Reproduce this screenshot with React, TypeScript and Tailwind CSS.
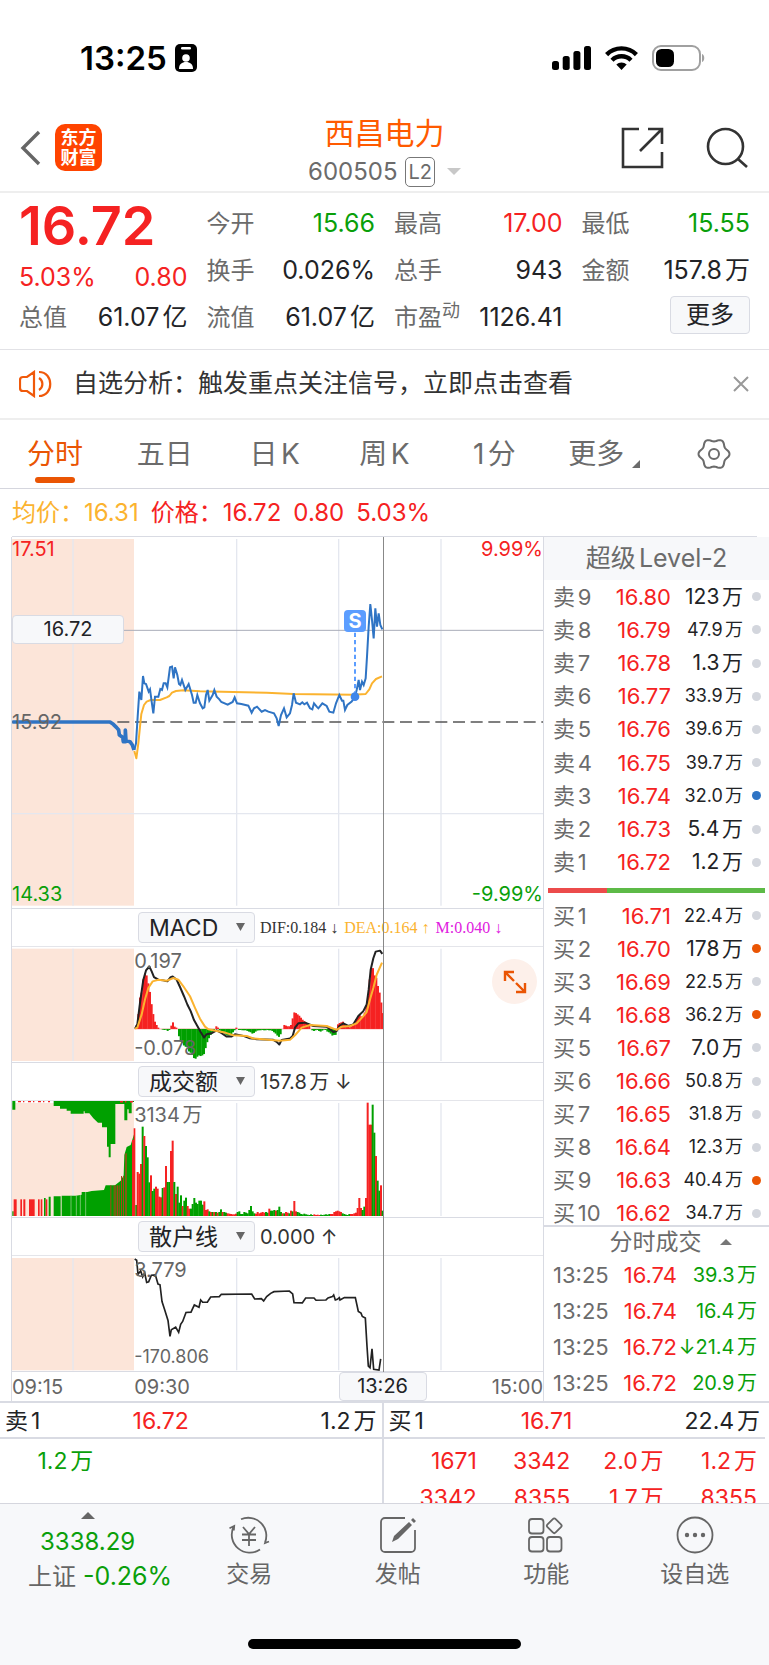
import type { ReactNode } from "react";

type Tone = "r" | "g";
type Bar = [x: number, height: number, tone: Tone];

type Level = {
  label: string;
  price: string;
  volume: string;
  dot?: "blue" | "orange";
};

const RED = "#f52222";
const GREEN = "#00a000";

const toneFill: Record<Tone, string> = { r: RED, g: GREEN };

const toneText: Record<string, string> = {
  red: "text-[#f52222]",
  green: "text-[#0a9f0a]",
  dark: "text-[#222326]",
};

const quotes = [
  { label: "今开", value: "15.66", tone: "green" },
  { label: "最高", value: "17.00", tone: "red" },
  { label: "最低", value: "15.55", tone: "green" },
  { label: "换手", value: "0.026%", tone: "dark" },
  { label: "总手", value: "943", tone: "dark" },
  { label: "金额", value: "157.8万", tone: "dark" },
  { label: "流值", value: "61.07亿", tone: "dark" },
  { label: "市盈", sup: "动", value: "1126.41", tone: "dark" },
];

const tabs = ["分时", "五日", "日K", "周K", "1分"];

const sells: Level[] = [
  { label: "卖9", price: "16.80", volume: "123万" },
  { label: "卖8", price: "16.79", volume: "47.9万" },
  { label: "卖7", price: "16.78", volume: "1.3万" },
  { label: "卖6", price: "16.77", volume: "33.9万" },
  { label: "卖5", price: "16.76", volume: "39.6万" },
  { label: "卖4", price: "16.75", volume: "39.7万" },
  { label: "卖3", price: "16.74", volume: "32.0万", dot: "blue" },
  { label: "卖2", price: "16.73", volume: "5.4万" },
  { label: "卖1", price: "16.72", volume: "1.2万" },
];

const buys: Level[] = [
  { label: "买1", price: "16.71", volume: "22.4万" },
  { label: "买2", price: "16.70", volume: "178万", dot: "orange" },
  { label: "买3", price: "16.69", volume: "22.5万" },
  { label: "买4", price: "16.68", volume: "36.2万", dot: "orange" },
  { label: "买5", price: "16.67", volume: "7.0万" },
  { label: "买6", price: "16.66", volume: "50.8万" },
  { label: "买7", price: "16.65", volume: "31.8万" },
  { label: "买8", price: "16.64", volume: "12.3万" },
  { label: "买9", price: "16.63", volume: "40.4万", dot: "orange" },
  { label: "买10", price: "16.62", volume: "34.7万" },
];

const trades = [
  { time: "13:25", price: "16.74", volume: "39.3万" },
  { time: "13:25", price: "16.74", volume: "16.4万" },
  { time: "13:25", price: "16.72", volume: "21.4万", arrow: "↓" },
  { time: "13:25", price: "16.72", volume: "20.9万" },
];

// Chart geometry is kept in 3x units
const OPENING = "37,576 330,576 340,583 350,593 356,600 358,615 368,622 370,635 376,635 376,600 378,632 390,635 397,645 402,660";
const PRICE =
  "403,660 408,640 413,560 418,485 424,510 429,438 433,460 438,462 446,485 450,478 455,515 460,550 465,500 475,500 481,477 486,480 491,460 497,460 502,472 510,412 516,410 521,445 525,412 532,435 537,462 541,465 546,450 556,480 566,462 576,495 581,518 587,518 592,495 600,520 608,535 613,532 618,495 623,480 628,512 638,495 643,480 650,500 658,508 664,516 683,524 698,516 704,502 711,520 724,522 745,527 755,548 762,535 771,530 785,545 795,540 805,545 822,550 830,565 836,588 843,555 852,535 860,562 870,550 876,525 881,490 888,518 900,523 907,517 913,523 921,518 930,535 937,538 942,520 950,530 955,535 967,520 980,528 988,545 1000,548 1008,520 1018,495 1026,512 1030,512 1035,540 1042,525 1055,515 1065,500 1070,480 1076,450 1080,480 1086,455 1091,465 1097,445 1101,380 1106,290 1111,222 1116,270 1121,325 1126,235 1131,290 1136,250 1141,285 1147,298";
const AVERAGE =
  "403,663 409,685 415,640 420,590 424,552 432,525 440,515 452,510 480,510 500,502 508,498 516,488 528,483 550,481 600,484 700,486 800,488 880,492 1060,494 1097,492 1108,478 1116,460 1128,447 1146,439";
const DIF =
  "405,388 412,375 420,310 430,240 438,212 448,200 455,215 462,232 475,240 490,242 502,245 512,232 518,230 530,240 540,262 552,290 562,315 572,335 582,362 592,380 602,398 612,415 620,405 635,402 650,393 665,402 680,412 695,412 705,405 730,410 750,417 770,420 820,422 830,428 838,436 845,422 870,418 878,410 885,385 895,372 915,370 940,380 980,382 1000,398 1010,395 1018,380 1030,372 1045,380 1060,375 1075,350 1090,335 1100,315 1106,270 1112,210 1120,175 1127,155 1140,152 1147,162";
const DEA =
  "405,388 412,385 425,345 435,300 445,265 458,245 475,240 500,243 520,235 535,240 550,260 570,290 585,325 600,358 615,382 625,390 650,395 675,400 700,408 740,410 760,418 840,425 870,422 885,408 905,385 930,377 980,380 1010,392 1025,382 1050,380 1070,372 1090,350 1100,338 1110,300 1120,265 1130,225 1146,188";
const RETAIL =
  "404,326 410,330 414,372 422,362 428,380 434,368 440,397 446,395 454,375 466,374 474,402 480,404 486,455 494,480 504,512 510,560 514,540 527,532 536,548 542,524 548,515 558,488 573,487 583,465 597,472 602,450 608,457 622,457 632,441 658,440 664,433 755,432 764,447 784,446 791,453 800,440 812,430 822,425 868,423 878,432 882,458 907,459 917,444 942,444 948,451 978,450 984,444 997,440 1001,435 1006,450 1012,448 1018,443 1020,450 1033,443 1066,443 1075,485 1083,490 1087,500 1096,505 1101,590 1105,650 1110,655 1116,598 1121,660 1137,662 1142,628";

const series = (start: number, tone: Tone, heights: number[]): Bar[] =>
  heights.map((height, i) => [start + i * 5, height, tone]);

const macdBars: Bar[] = [
  ...series(407, "r", [12, 45, 95, 110, 150, 168, 162, 138, 112, 75, 45, 22, 12, 4]),
  ...series(485, "g", [2, 3, 2, 6, 3]),
  ...series(511, "r", [10, 20, 7, 4]),
  ...series(534, "g", [22, 38, 42, 50, 54, 56, 68, 72, 78, 88, 90, 84, 80, 82, 80, 76, 58, 40, 28, 18, 10, 6]),
  ...series(646, "r", [8, 4]),
  ...series(656, "g", [4, 8, 12, 14, 18, 20, 20, 16, 10, 4]),
  ...series(706, "r", [4]),
  ...series(714, "g", [3, 3, 4, 4, 4, 6, 8, 10, 14, 12, 8, 5, 4, 4, 3, 4, 4, 3, 4, 4, 6, 10, 14, 20, 24, 16]),
  ...series(850, "r", [12, 10, 8, 8, 12, 32, 50, 48, 44, 40, 34, 28, 24, 20, 16, 12]),
  ...series(934, "g", [4, 6, 4, 3, 6, 8, 5, 2, 3, 8, 10, 14, 20, 18, 18]),
  ...series(1011, "r", [14, 18, 20, 22, 12, 8, 6, 5, 8, 10, 18, 30, 36, 42, 38, 36, 50, 70, 100, 150, 184, 184, 162, 155, 130, 110, 80, 48]),
];

const volumeBars: Bar[] = [
  [406, 33, "g"], [410, 132, "r"], [415, 127, "r"], [420, 156, "r"], [425, 268, "g"], [430, 240, "r"], [435, 210, "g"],
  [440, 176, "g"], [445, 101, "g"], [450, 122, "r"], [455, 75, "g"], [460, 82, "g"], [465, 88, "r"], [470, 82, "r"],
  [475, 58, "r"], [480, 56, "r"], [485, 84, "g"], [490, 86, "r"], [495, 150, "r"], [500, 102, "g"], [505, 102, "g"],
  [510, 195, "r"], [515, 226, "r"], [520, 102, "g"], [525, 66, "r"], [530, 88, "g"], [535, 40, "g"], [540, 62, "g"],
  [545, 30, "r"], [550, 46, "g"], [555, 55, "g"], [560, 30, "r"], [565, 22, "r"], [570, 22, "g"], [575, 36, "g"],
  [580, 54, "g"], [585, 40, "g"], [590, 36, "g"], [595, 46, "g"], [600, 46, "g"], [605, 34, "g"], [610, 44, "r"],
  [615, 18, "r"], [620, 20, "r"], [625, 14, "g"], [630, 12, "r"], [635, 12, "g"], [640, 12, "r"], [645, 12, "g"],
  [650, 10, "r"], [655, 12, "g"], [660, 20, "g"], [665, 12, "r"], [670, 12, "g"], [675, 10, "g"],
  ...series(680, "r", [8, 7, 6, 5, 5, 7]),
  ...series(710, "g", [12, 14, 6, 6, 12, 10, 8]),
  ...series(745, "g", [18, 30, 14, 8]),
  ...series(765, "r", [7, 12, 8, 10, 12, 10]),
  ...series(795, "g", [12, 10]),
  [805, 22, "r"], [810, 16, "g"], [815, 16, "g"], [820, 18, "g"], [825, 16, "r"], [830, 18, "g"], [835, 28, "g"],
  [840, 12, "g"], [845, 8, "r"], [850, 8, "g"], [855, 12, "r"], [860, 10, "r"], [865, 8, "g"], [870, 16, "r"],
  [875, 14, "g"], [880, 45, "r"], [885, 14, "r"], [890, 12, "g"], [895, 10, "g"],
  ...series(900, "g", [6, 5, 7, 5, 4, 3, 5, 3]),
  ...series(940, "r", [5, 3, 4, 3]),
  ...series(960, "g", [4, 3, 4, 5, 4, 6]),
  ...series(990, "r", [6, 6, 12, 14, 16, 14, 12]),
  ...series(1025, "g", [8, 6, 4, 3, 6]),
  ...series(1050, "r", [6, 6, 8, 10, 24, 54]),
  [1080, 24, "r"], [1085, 18, "g"], [1090, 28, "g"], [1095, 54, "r"], [1100, 340, "r"], [1105, 274, "r"],
  [1110, 274, "r"], [1115, 334, "g"], [1120, 250, "g"], [1125, 180, "r"], [1130, 106, "g"], [1135, 76, "g"],
  [1140, 92, "r"], [1145, 16, "g"],
];

const auctionRed = [[41, 9], [61, 5], [70, 6], [87, 17], [114, 5], [122, 5], [137, 5]];
const auctionStripes = [331, 341, 346, 351, 356, 363, 369];

const gearPath = (() => {
  const points = Array.from({ length: 72 }, (_, i) => {
    const angle = (i * Math.PI) / 36;
    const radius = 14 + 1.5 * Math.cos(6 * angle);
    return `${(17 + radius * Math.cos(angle)).toFixed(2)},${(17 + radius * Math.sin(angle)).toFixed(2)}`;
  });
  return `M${points.join("L")}Z`;
})();

function StatusBar() {
  return (
    <div className="flex h-[100px] items-center justify-between pt-4 pr-16 pl-20">
      <div className="flex items-center gap-2 text-[33px] leading-8 font-semibold text-black">
        13:25
        <svg width="22" height="28" viewBox="0 0 22 28">
          <rect width="22" height="28" rx="5" fill="#000" />
          <rect x="6" y="3" width="10" height="2.6" rx="1.3" fill="#fff" />
          <circle cx="11" cy="14" r="3.8" fill="#fff" />
          <path d="M4 25c0-5 3-7 7-7s7 2 7 7z" fill="#fff" />
        </svg>
      </div>
      <div className="flex items-center gap-[14px]">
        <svg width="39" height="24" viewBox="0 0 39 24">
          <rect x="0" y="15" width="7" height="9" rx="2.5" />
          <rect x="10.7" y="10" width="7" height="14" rx="2.5" />
          <rect x="21.4" y="5" width="7" height="19" rx="2.5" />
          <rect x="32" y="0" width="7" height="24" rx="2.5" />
        </svg>
        <svg width="33" height="24" viewBox="0 0 33 24" fill="none" stroke="#000" strokeWidth="4.4">
          <path d="M1.6 8.6a21 21 0 0 1 29.8 0" />
          <path d="M7 14.2a13.4 13.4 0 0 1 19 0" />
          <path d="M11.3 18.6a7.4 7.4 0 0 1 10.4 0L16.5 24z" fill="#000" stroke="none" />
        </svg>
        <svg width="53" height="26" viewBox="0 0 53 26">
          <rect x="1" y="1" width="47" height="24" rx="8" fill="none" stroke="#a0a0a0" strokeWidth="2" />
          <path d="M50 9c3 1 3 7 0 8z" fill="#a0a0a0" />
          <rect x="4" y="4" width="18" height="18" rx="5.5" />
        </svg>
      </div>
    </div>
  );
}

function Header() {
  return (
    <header className="grid h-[93px] grid-cols-[1fr_auto_1fr] items-center border-b-2 border-[#eeeeee] px-5 pt-1">
      <div className="flex items-center gap-[14px]">
        <button aria-label="返回">
          <svg width="21" height="36" viewBox="0 0 21 36" fill="none" stroke="#666" strokeWidth="3.4">
            <path d="M19 2 3 18l16 16" />
          </svg>
        </button>
        <a
          href="#"
          className="flex size-[47px] flex-col items-center justify-center rounded-[10px] bg-[#ff4400] text-[18px] leading-[20px] font-bold text-white"
        >
          <span>东方</span>
          <span>财富</span>
        </a>
      </div>
      <div className="flex flex-col items-center pt-2">
        <h1 className="text-[30px] leading-10 text-[#ff5a00]">西昌电力</h1>
        <div className="flex items-center gap-2 text-[24px] leading-[38px] text-[#6b6b6b]">
          600505
          <span className="rounded-[5px] border border-[#777] px-[2px] text-[20px] leading-7">L2</span>
          <svg className="ml-1" width="14" height="7" viewBox="0 0 14 7" fill="#c8c8c8">
            <path d="M0 0h14L7 7z" />
          </svg>
        </div>
      </div>
      <div className="flex items-center justify-end gap-10">
        <button aria-label="分享">
          <svg width="44" height="44" viewBox="0 0 44 44" fill="none" stroke="#333" strokeWidth="2.6">
            <path d="M18 3H2v38h39V26M27 3h14v15M40 4 19 25" />
          </svg>
        </button>
        <button aria-label="搜索">
          <svg width="44" height="44" viewBox="0 0 44 44" fill="none" stroke="#333" strokeWidth="2.6">
            <circle cx="20.5" cy="20.5" r="17.5" />
            <path d="m33 33 9 8" />
          </svg>
        </button>
      </div>
    </header>
  );
}

function Stats() {
  return (
    <section className="grid grid-cols-4 gap-x-[19px] border-b border-[#e2e2e6] px-[19px] pt-[7px] pb-2 text-[24px] leading-[47px]">
      <div className="row-span-3 flex flex-col">
        <div className="text-[54px] leading-[52px] font-semibold text-[#f52222]">16.72</div>
        <div className="flex h-[42px] justify-between text-[25px] leading-[50px] text-[#f52222]">
          <span>5.03%</span>
          <span>0.80</span>
        </div>
        <div className="flex justify-between">
          <span className="text-[#6b6b6b]">总值</span>
          <span className="text-[25px] text-[#222326]">61.07亿</span>
        </div>
      </div>
      {quotes.map((q) => (
        <div key={q.label} className="flex justify-between whitespace-nowrap">
          <span className="text-[#6b6b6b]">
            {q.label}
            {q.sup && <sup className="text-[18px] leading-none">{q.sup}</sup>}
          </span>
          <span className={`text-[25px] ${toneText[q.tone]}`}>{q.value}</span>
        </div>
      ))}
      <div className="flex items-start justify-end pt-[2px]">
        <button className="rounded-[4px] border border-[#d9dbe3] bg-[#f7f8fa] px-[15px] leading-9 text-[#222326]">
          更多
        </button>
      </div>
    </section>
  );
}

function Notice() {
  return (
    <section className="flex h-[70px] items-center border-b-2 border-[#eeeeee] px-[19px] text-[25px] text-[#333]">
      <svg width="34" height="28" viewBox="0 0 34 28" fill="none" stroke="#f0590a" strokeWidth="2.2">
        <path d="M15 2v24l-7-5H4a3 3 0 0 1-3-3V10a3 3 0 0 1 3-3h4zM20 8a7 7 0 0 1 0 12M20 2c15 0 15 24 0 24" />
      </svg>
      <p className="ml-5 flex-1 whitespace-nowrap">自选分析：触发重点关注信号，立即点击查看</p>
      <button aria-label="关闭">
        <svg width="18" height="16" viewBox="0 0 18 16" stroke="#999" strokeWidth="2">
          <path d="m2 1 14 14M16 1 2 15" />
        </svg>
      </button>
    </section>
  );
}

function Tabs() {
  return (
    <nav className="flex h-[69px] items-stretch border-b border-[#d5d6de] text-[28px] text-[#6b6b6b]">
      {tabs.map((tab, i) => (
        <button
          key={tab}
          className={`relative flex-1 ${i === 0 ? "text-[#ea5504]" : ""}`}
        >
          {tab}
          {i === 0 && (
            <span className="absolute bottom-[5px] left-1/2 h-[6px] w-10 -translate-x-1/2 rounded-full bg-[#ea5504]" />
          )}
        </button>
      ))}
      <button className="flex flex-1 items-center justify-center gap-2">
        更多
        <svg className="mt-5" width="8" height="8" viewBox="0 0 8 8" fill="#6b6b6b">
          <path d="M8 0v8H0z" />
        </svg>
      </button>
      <button className="flex flex-1 items-center justify-center" aria-label="设置">
        <svg width="34" height="34" viewBox="0 0 34 34" fill="none" stroke="#6b6b6b" strokeWidth="2">
          <path d={gearPath} />
          <circle cx="17" cy="17" r="5" />
        </svg>
      </button>
    </nav>
  );
}

function Panel({
  box,
  top,
  bottom,
  height,
  drawing,
  children,
}: {
  box: string;
  top: number;
  bottom: number;
  height: string;
  drawing: ReactNode;
  children?: ReactNode;
}) {
  return (
    <div className={`relative border-b border-[#d9dbe3] text-[20px] leading-6 text-[#666] ${height}`}>
      <svg className="block size-full" viewBox={box} preserveAspectRatio="none">
        <rect x="36" y={top} width="366" height={bottom - top} fill="#fce5d9" />
        <path
          d={`M219 ${top}V${bottom}M710 ${top}V${bottom}M1016 ${top}V${bottom}M1323 ${top}V${bottom}`}
          stroke="#e4e7ef"
          strokeWidth="4"
        />
        {drawing}
      </svg>
      {children}
    </div>
  );
}

function IndicatorBar({ name, children }: { name: string; children: ReactNode }) {
  return (
    <div className="flex h-[38px] items-center gap-[5px] border-b border-[#e4e5ea] pl-[126px] text-[20px] whitespace-nowrap text-[#333]">
      <label className="relative flex shrink-0">
        <select
          aria-label="指标"
          className="h-[31px] w-[117px] appearance-none rounded-[4px] border border-[#d9dbe3] bg-[#f7f8fa] pl-[10px] text-[23px] leading-7 text-[#222326]"
        >
          <option>{name}</option>
        </select>
        <svg className="absolute top-[11px] right-[10px]" width="9" height="8" viewBox="0 0 9 8" fill="#666">
          <path d="M0 0h9L4.5 8z" />
        </svg>
      </label>
      {children}
    </div>
  );
}

function Bars({ data, base, down }: { data: Bar[]; base: number; down?: boolean }) {
  return (
    <>
      {data.map(([x, height, tone]) => (
        <rect
          key={x}
          x={x}
          y={down && tone === "g" ? base : base - height}
          width="6"
          height={height}
          fill={toneFill[tone]}
        />
      ))}
    </>
  );
}

function Charts() {
  return (
    <div className="relative ml-[11px] min-w-0 flex-1 border-r border-l border-[#d9dbe3]">
      <Panel
        box="36 21 1593 1113"
        top={27}
        bottom={1127}
        height="h-[372px]"
        drawing={
          <>
            <path d="M36 851H1629" stroke="#e4e7ef" strokeWidth="4" />
            <path d="M36 301H1629" stroke="#a9adb8" strokeWidth="3" />
            <path d="M36 576H1629" stroke="#555" strokeWidth="5" strokeDasharray="36 17" strokeDashoffset="2" />
            <g fill="none" strokeLinejoin="round">
              <polyline points={AVERAGE} stroke="#fbb32f" strokeWidth="6" />
              <polyline points={OPENING} stroke="#2f74c4" strokeWidth="11" />
              <polyline points={PRICE} stroke="#2f74c4" strokeWidth="6" strokeLinejoin="miter" />
            </g>
            <path d="M1065 308V488" stroke="#5b9dff" strokeWidth="6" strokeDasharray="13 9" />
            <circle cx="1065" cy="500" r="13" fill="#3f86ea" />
          </>
        }
      >
        <span className="absolute top-0 left-0 text-[#f52222]">17.51</span>
        <span className="absolute top-0 right-0 text-[#f52222]">9.99%</span>
        <span className="absolute top-[173px] left-0">15.92</span>
        <span className="absolute bottom-[2px] left-0 text-[#0a9f0a]">14.33</span>
        <span className="absolute right-0 bottom-[2px] text-[#0a9f0a]">-9.99%</span>
        <span className="absolute top-[78px] left-0 w-[112px] rounded-[4px] border border-[#d9dbe3] bg-[#f7f8fa] text-center leading-[27px] text-[#222326]">
          16.72
        </span>
        <span className="absolute top-[73px] left-[64.6%] flex size-[22px] -translate-x-1/2 items-center justify-center rounded-[4px] bg-[#5b9dff] leading-[22px] font-bold text-white">
          S
        </span>
      </Panel>

      <IndicatorBar name="MACD">
        <div className="flex gap-[6px] font-['Liberation_Serif','DejaVu_Serif',serif] text-[16px]">
          <span>DIF:0.184 ↓</span>
          <span className="text-[#fbb32f]">DEA:0.164 ↑</span>
          <span className="text-[#e020e0]">M:0.040 ↓</span>
        </div>
      </IndicatorBar>
      <Panel
        box="36 141 1593 348"
        top={146}
        bottom={486}
        height="h-[116px]"
        drawing={
          <>
            <path d="M403 389H1150" stroke={RED} strokeWidth="2" opacity="0.5" />
            <Bars data={macdBars} base={389} down />
            <polyline points={DIF} fill="none" stroke="#222" strokeWidth="6" strokeLinejoin="round" />
            <polyline points={DEA} fill="none" stroke="#fbb32f" strokeWidth="6" strokeLinejoin="round" />
          </>
        }
      >
        <span className="absolute top-[2px] left-[23%]">0.197</span>
        <span className="absolute bottom-[2px] left-[23%]">-0.078</span>
        <button
          aria-label="全屏"
          className="absolute top-3 right-[6px] flex size-[45px] items-center justify-center rounded-full bg-[#fdf0ea]"
        >
          <svg width="24" height="24" viewBox="0 0 24 24" fill="none" stroke="#ea5504" strokeWidth="2.4">
            <path d="M2 11V2h9M2 2l9 9M22 13v9h-9M22 22l-9-9" />
          </svg>
        </button>
      </Panel>

      <IndicatorBar name="成交额">
        <span>157.8万 ↓</span>
      </IndicatorBar>
      <Panel
        box="36 603 1593 348"
        top={609}
        bottom={948}
        height="h-[117px]"
        drawing={
          <>
            <path
              fill={GREEN}
              d="M37 603h9v26h-9zM161 603H402V606H395V640H386V628H382V661H373V612H346V732H332V772H326V740H321V682H306V668H294L280 655 268 640H254V634H251V641H212V632H200V626H180V618H161z"
            />
            <path d="M54 604H150M360 605H404" stroke={RED} strokeWidth="5" strokeDasharray="9 6 4 11" />
            <path
              fill={GREEN}
              d="M37 948V934h4v14zM132 948V894h5v54zM146 948V890h6v58zM161 948V889H182V948zM185 948V887H228L245 884V876H262L275 873 312 870 317 856H345L362 842 371 826 373 765 380 741 392 735 403 700V948z"
            />
            {auctionRed.map(([x, width]) => (
              <rect key={x} x={x} y="898" width={width} height="50" fill={RED} />
            ))}
            <path d="M213 887v61M229 886v61M241 885v61M257 876v72" stroke="#a9d59f" strokeWidth="2" />
            {auctionStripes.map((x) => (
              <rect key={x} x={x} y={x > 360 ? 828 : 856} width="3" height={x > 360 ? 120 : 92} fill="#a8431a" />
            ))}
            <path d="M378 760V948" stroke={RED} strokeWidth="3" />
            <path d="M396 720h5V685h5V948h-10z" fill={RED} />
            <Bars data={volumeBars} base={948} />
          </>
        }
      >
        <span className="absolute top-[2px] left-[23%]">3134万</span>
      </Panel>

      <IndicatorBar name="散户线">
        <span>0.000 ↑</span>
      </IndicatorBar>
      <Panel
        box="36 317 1593 348"
        top={323}
        bottom={663}
        height="h-[116px]"
        drawing={<polyline points={RETAIL} fill="none" stroke="#222" strokeWidth="5" />}
      >
        <span className="absolute top-[2px] left-[23%]">3.779</span>
        <span className="absolute bottom-[2px] left-[23%] text-[18px]">-170.806</span>
      </Panel>

      <div className="relative flex h-[29px] items-center justify-between text-[20px] text-[#666]">
        <span>09:15</span>
        <span>15:00</span>
        <span className="absolute left-[23%]">09:30</span>
        <span className="absolute left-[61.5%] w-[88px] rounded-[4px] border border-[#d9dbe3] bg-[#f7f8fa] text-center leading-[27px] text-[#222326]">
          13:26
        </span>
      </div>
      <div className="absolute top-0 bottom-[29px] left-[69.9%] w-px bg-[#888]" />
    </div>
  );
}

function LevelTable({ levels, height }: { levels: Level[]; height: string }) {
  return (
    <table className={`w-full text-[22px] leading-6 ${height}`}>
      <tbody>
        {levels.map((level) => (
          <tr key={level.label}>
            <td className="p-0 pl-[9px] text-[#6b6b6b]">{level.label}</td>
            <td className="p-0 text-right text-[#f52222]">{level.price}</td>
            <td
              className={`w-[72px] p-0 text-right text-[#222326] ${level.volume.length > 4 ? "text-[18px]" : "text-[21px]"}`}
            >
              {level.volume}
            </td>
            <td className="w-[26px] p-0">
              <span
                className={`mx-auto block size-[9px] rounded-full ${
                  level.dot === "blue" ? "bg-[#2f74c4]" : level.dot === "orange" ? "bg-[#ea5504]" : "bg-[#d3d6dd]"
                }`}
              />
            </td>
          </tr>
        ))}
      </tbody>
    </table>
  );
}

function OrderBook() {
  return (
    <aside className="flex w-[225px] shrink-0 flex-col">
      <h2 className="bg-[#f7f8fa] text-center text-[25px] leading-[43px] text-[#6b6b6b]">超级Level-2</h2>
      <LevelTable levels={sells} height="h-[299px]" />
      <div className="mx-1 mt-[9px] mb-[6px] flex h-[5px] bg-[#5dba47]">
        <div className="w-[27%] bg-[#ec4b4b]" />
      </div>
      <div className="h-[326px] overflow-hidden">
        <LevelTable levels={buys} height="h-[331px]" />
      </div>
      <button className="flex h-8 items-center justify-center gap-[18px] border-t-2 border-[#d9dbe3] pl-7 text-[23px] text-[#6b6b6b]">
        分时成交
        <svg width="12" height="6" viewBox="0 0 12 6" fill="#777">
          <path d="M6 0l6 6H0z" />
        </svg>
      </button>
      <table className="h-[144px] w-full text-[22px] leading-7">
        <tbody>
          {trades.map((t, i) => (
            <tr key={i}>
              <td className="p-0 pl-[9px] text-[#6b6b6b]">{t.time}</td>
              <td className="p-0 text-right text-[#f52222]">{t.price}</td>
              <td className="w-[92px] p-0 pr-3 text-right text-[20px] whitespace-nowrap text-[#0a9f0a]">
                {t.arrow}
                {t.volume}
              </td>
            </tr>
          ))}
        </tbody>
      </table>
    </aside>
  );
}

function Queue({
  label,
  price,
  volume,
  orders,
  tone,
}: {
  label: string;
  price: string;
  volume: string;
  orders: string[];
  tone: string;
}) {
  return (
    <div className="flex-1 text-[23px] text-[#222326]">
      <div className="grid grid-cols-2 border-b-2 border-[#d9dbe3] px-[5px] pt-[2px] leading-8">
        <div className="flex justify-between">
          <span>{label}</span>
          <span className="pr-[2px] text-[#f52222]">{price}</span>
        </div>
        <span className="text-right">{volume}</span>
      </div>
      <div className={`grid grid-cols-4 pt-1 pr-2 text-right leading-[37px] ${toneText[tone]}`}>
        {orders.map((order, i) => (
          <span key={i}>{order}</span>
        ))}
      </div>
    </div>
  );
}

function NavItem({ label, children }: { label: string; children: ReactNode }) {
  return (
    <a href="#" className="flex flex-1 flex-col items-center gap-[2px] pt-3 text-[23px] leading-9 text-[#666]">
      <svg width="42" height="38" viewBox="0 0 42 38" fill="none" stroke="#666" strokeWidth="1.8">
        {children}
      </svg>
      {label}
    </a>
  );
}

function BottomNav() {
  return (
    <footer className="flex flex-1 flex-col justify-between border-t border-[#d5d6de] bg-[#f7f8fa] pb-4">
      <nav className="flex">
        <a href="#" className="flex w-[175px] shrink-0 flex-col items-start pt-2 pl-7 text-[24px] leading-[34px]">
          <span className="flex flex-col items-center gap-[6px] pl-3 text-[#0a9f0a]">
            <svg width="14" height="7" viewBox="0 0 14 7" fill="#666">
              <path d="M7 0l7 7H0z" />
            </svg>
            3338.29
          </span>
          <span className="text-[25px] whitespace-nowrap text-[#0a9f0a]">
            <span className="text-[24px] text-[#666]">上证</span> -0.26%
          </span>
        </a>
        <NavItem label="交易">
          <path d="M13 3.300A18 18 0 0 1 37 26.500M38.200 22.500 37 27l4-1.500M32 33.500A18 18 0 0 1 5.500 11M1.500 12.200 6.200 10l-.4 4.500" />
          <path d="m15 11 6 7 6-7M14 18.500h14M14 24h14M21 18v12" />
        </NavItem>
        <NavItem label="发帖">
          <path d="M28 2H8a4 4 0 0 0-4 4v26a4 4 0 0 0 4 4h26a4 4 0 0 0 4-4V14" />
          <path d="m15 26 2-6L32 6l3 3-14 14zM34 4l2-2 3 3-2 2z" fill="#666" stroke="none" />
        </NavItem>
        <NavItem label="功能">
          <rect x="4" y="3" width="14.5" height="14.5" rx="3" />
          <rect x="4" y="21" width="14.5" height="14.5" rx="3" />
          <rect x="22" y="21" width="14.5" height="14.5" rx="3" />
          <rect x="23.5" y="4" width="11.5" height="11.5" rx="2" transform="rotate(45 29.25 9.75)" />
        </NavItem>
        <NavItem label="设自选">
          <circle cx="21" cy="19" r="17.5" />
          <g fill="#666" stroke="none">
            <circle cx="13" cy="19" r="2.2" />
            <circle cx="21" cy="19" r="2.2" />
            <circle cx="29" cy="19" r="2.2" />
          </g>
        </NavItem>
      </nav>
      <div className="mx-auto h-[10px] w-[273px] rounded-full bg-black" />
    </footer>
  );
}

export default function App() {
  return (
    <div className="flex min-h-screen w-full flex-col bg-white font-['Inter','Noto_Sans_CJK_SC',sans-serif] [text-autospace:normal]">
      <StatusBar />
      <Header />
      <Stats />
      <Notice />
      <Tabs />
      <div className="flex h-[47px] items-center gap-3 pl-3 text-[24px] text-[#f52222]">
        <span className="text-[#fbb32f]">均价：16.31</span>
        <span>价格：16.72</span>
        <span>0.80</span>
        <span>5.03%</span>
      </div>
      <div className="mx-3 h-px bg-[#d9dbe3]" />
      <main className="flex">
        <Charts />
        <OrderBook />
      </main>
      <section className="flex h-[102px] overflow-hidden border-t-2 border-[#d9dbe3] pr-1">
        <Queue label="卖1" price="16.72" volume="1.2万" orders={["1.2万"]} tone="green" />
        <div className="w-[2px] bg-[#d9dbe3]" />
        <Queue
          label="买1"
          price="16.71"
          volume="22.4万"
          orders={["1671", "3342", "2.0万", "1.2万", "3342", "8355", "1.7万", "8355"]}
          tone="red"
        />
      </section>
      <BottomNav />
    </div>
  );
}
